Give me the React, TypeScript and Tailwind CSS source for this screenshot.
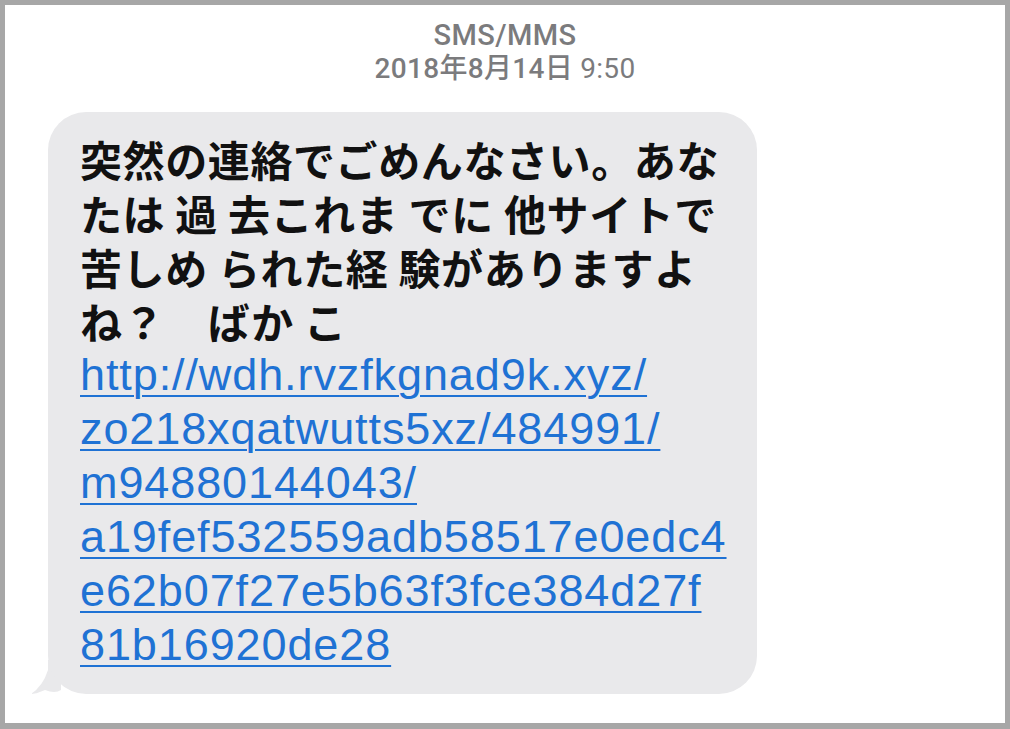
import React from "react"

const jp = { fontFamily: '"Noto Sans CJK JP", "Noto Sans", sans-serif' }
const latin = { fontFamily: '"Liberation Sans", Arial, "Noto Sans CJK JP", sans-serif' }
const ui = { fontFamily: 'Roboto, "Noto Sans CJK JP", sans-serif' }

const bodyLines = [
  "突然の連絡でごめんなさい。あな",
  "たは 過 去これま でに 他サイトで",
  "苦しめ られた経 験がありますよ",
  "ね？　ばか こ",
]

const linkLines = [
  "http://wdh.rvzfkgnad9k.xyz/",
  "zo218xqatwutts5xz/484991/",
  "m94880144043/",
  "a19fef532559adb58517e0edc4",
  "e62b07f27e5b63f3fce384d27f",
  "81b16920de28",
]

function Tail() {
  return (
    <svg className="absolute left-[-17px] bottom-0" width="40" height="34" viewBox="0 0 40 34">
      <path d="M17 0 L30 0 L30 30 Q24 34 14 30 Q8 33 0 34 Q12 26 17 10 Z" fill="#e9e9eb" />
    </svg>
  )
}

export default function App() {
  return (
    <div className="w-[1010px] h-[729px] bg-[#a7a7a7] pt-[5px] pl-[5px] pr-[5px] pb-[6px]">
      <div className="w-full h-full bg-white flex flex-col">
        <div className="flex flex-col items-center pt-[13px] text-[#7b7b7d]" style={ui}>
          <div className="text-[29px] font-medium leading-[34px] tracking-[0.4px]">SMS/MMS</div>
          <div className="text-[28px] leading-[34px] tracking-[0.3px]">
            <span className="font-medium">2018年8月14日</span> 9:50
          </div>
        </div>
        <div className="mt-[26px] ml-[43px] relative w-[709px]">
          <Tail />
          <div className="relative bg-[#e9e9eb] rounded-[38px] pl-[32px] pr-[20px] pt-[20px] pb-[22px]">
            <div className="text-[42px] leading-[54px] font-bold text-[#111] tracking-[0.6px]" style={jp}>
              {bodyLines.map((l) => (
                <div key={l} className="whitespace-pre">{l}</div>
              ))}
            </div>
            <div className="text-[45px] leading-[54px] text-[#1f72d4] tracking-[0.9px]" style={latin}>
              {linkLines.map((l) => (
                <div key={l}>
                  <a href="#" className="underline decoration-2 underline-offset-[5px]">{l}</a>
                </div>
              ))}
            </div>
          </div>
        </div>
      </div>
    </div>
  )
}
